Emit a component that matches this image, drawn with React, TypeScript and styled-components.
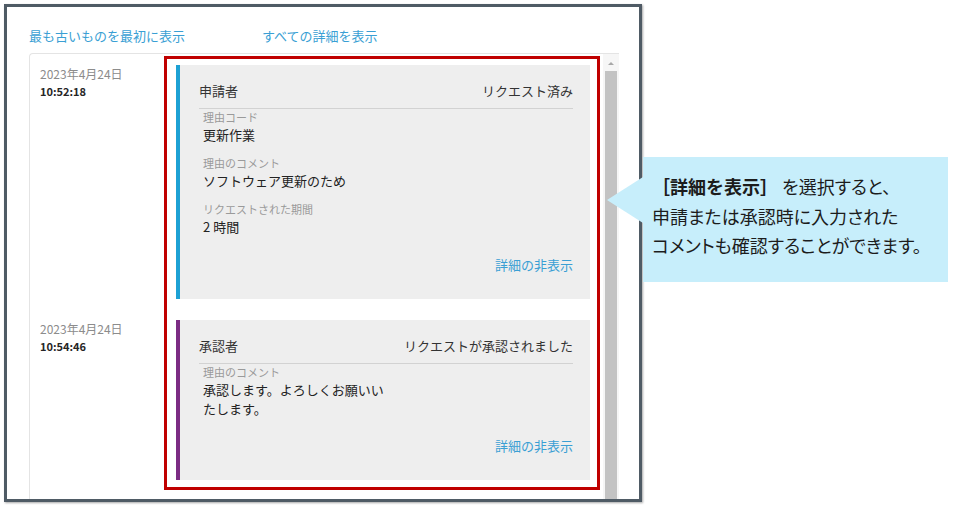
import React from 'react';
import styled, { createGlobalStyle } from 'styled-components';

const GlobalStyle = createGlobalStyle`
  body {
    margin: 0;
    background: #fff;
    font-family: "Noto Sans CJK JP", "Noto Sans", sans-serif;
  }
`;

const Page = styled.div`
  position: relative;
  width: 956px;
  height: 507px;
  padding: 4px;
  box-sizing: border-box;
  background: #fff;
  overflow: hidden;
`;

const Frame = styled.div`
  width: 638px;
  height: 498px;
  box-sizing: border-box;
  border: 3px solid #4f5b65;
  box-shadow: 1px 1px 2px rgba(0, 0, 0, 0.35);
  background: #fff;
  display: flex;
  flex-direction: column;
  overflow: hidden;
`;

const LinksRow = styled.div`
  display: flex;
  gap: 77px;
  padding: 20px 0 0 22px;
  margin-bottom: 8px;
`;

const TextLink = styled.a`
  font-size: 13px;
  line-height: 18px;
  color: #3a9fd4;
  text-decoration: none;
  cursor: pointer;
`;

const Panel = styled.div`
  margin-left: 22px;
  width: 589px;
  flex: 1;
  display: flex;
  border-left: 1px solid #e4e4e4;
  border-top: 1px solid #e4e4e4;
  border-top-left-radius: 4px;
  overflow: hidden;
`;

const Timeline = styled.div`
  position: relative;
  flex: 1;
  padding-top: 11px;
  display: flex;
  flex-direction: column;
  gap: 21px;
`;

const Entry = styled.div`
  display: grid;
  grid-template-columns: 146px 1fr;
  padding-right: 13px;
`;

const DateCell = styled.div`
  padding: 1px 0 0 10px;
`;

const DateText = styled.div`
  font-size: 12px;
  line-height: 16px;
  color: #8c8c8c;
`;

const TimeText = styled.div`
  font-size: 11px;
  line-height: 16px;
  font-weight: 600;
  color: #262626;
  margin-top: 1px;
`;

const Card = styled.div<{ $accent: string }>`
  background: #eeeeee;
  border-left: 4px solid ${(p) => p.$accent};
  padding: 17px 17px 25px 19px;
`;

const CardHeader = styled.div`
  display: flex;
  justify-content: space-between;
  font-size: 13px;
  line-height: 18px;
  color: #333;
  padding-bottom: 8px;
  border-bottom: 1px solid #d2d2d2;
`;

const Fields = styled.div`
  display: flex;
  flex-direction: column;
  gap: 11px;
  padding-left: 4px;
  width: 184px;
`;

const Field = styled.div`
  display: flex;
  flex-direction: column;
`;

const FieldLabel = styled.div`
  font-size: 11px;
  line-height: 16px;
  color: #9a9a9a;
`;

const FieldValue = styled.div`
  font-size: 13px;
  line-height: 19px;
  color: #222;
`;

const CardFooter = styled.div<{ $gap: number }>`
  display: flex;
  justify-content: flex-end;
  margin-top: ${(p) => p.$gap}px;
`;

const Highlight = styled.div`
  position: absolute;
  left: 134px;
  top: 2px;
  width: 436px;
  height: 434px;
  box-sizing: border-box;
  border: 3px solid #c00000;
  pointer-events: none;
`;

const Scrollbar = styled.div`
  width: 16px;
  background: #f6f6f6;
  display: flex;
  flex-direction: column;
  align-items: center;
`;

const ArrowUp = styled.div`
  margin-top: 8px;
  width: 0;
  height: 0;
  border-left: 3px solid transparent;
  border-right: 3px solid transparent;
  border-bottom: 3px solid #a8a8a8;
`;

const Thumb = styled.div`
  margin-top: 6px;
  width: 12px;
  flex: 1;
  background: #c3c3c3;
`;

const Callout = styled.div`
  position: absolute;
  left: 643px;
  top: 157px;
  width: 305px;
  height: 125px;
  box-sizing: border-box;
  background: #c7eefb;
  padding: 15px 0 0 9px;
  font-size: 18px;
  line-height: 29.5px;
  color: #1c1c1c;
  font-feature-settings: "palt";

  &::before {
    content: '';
    position: absolute;
    left: -36px;
    top: 20px;
    border-right: 36px solid #c7eefb;
    border-top: 23px solid transparent;
    border-bottom: 23px solid transparent;
  }
`;

const Strong = styled.b`
  font-weight: 700;
  font-feature-settings: normal;
`;

type Item = { label: string; value: string };

type Entry = {
  date: string;
  time: string;
  accent: string;
  role: string;
  status: string;
  fields: Item[];
  footerGap: number;
};

const entries: Entry[] = [
  {
    date: '2023年4月24日',
    time: '10:52:18',
    accent: '#1da1d4',
    role: '申請者',
    status: 'リクエスト済み',
    fields: [
      { label: '理由コード', value: '更新作業' },
      { label: '理由のコメント', value: 'ソフトウェア更新のため' },
      { label: 'リクエストされた期間', value: '2 時間' },
    ],
    footerGap: 20,
  },
  {
    date: '2023年4月24日',
    time: '10:54:46',
    accent: '#7b2c83',
    role: '承認者',
    status: 'リクエストが承認されました',
    fields: [{ label: '理由のコメント', value: '承認します。よろしくお願いいたします。' }],
    footerGap: 19,
  },
];

export default function App() {
  return (
    <Page>
      <GlobalStyle />
      <Frame>
        <LinksRow>
          <TextLink>最も古いものを最初に表示</TextLink>
          <TextLink>すべての詳細を表示</TextLink>
        </LinksRow>
        <Panel>
          <Timeline>
            {entries.map((e, i) => (
              <Entry key={i}>
                <DateCell>
                  <DateText>{e.date}</DateText>
                  <TimeText>{e.time}</TimeText>
                </DateCell>
                <Card $accent={e.accent}>
                  <CardHeader>
                    <span>{e.role}</span>
                    <span>{e.status}</span>
                  </CardHeader>
                  <Fields>
                    {e.fields.map((f) => (
                      <Field key={f.label}>
                        <FieldLabel>{f.label}</FieldLabel>
                        <FieldValue>{f.value}</FieldValue>
                      </Field>
                    ))}
                  </Fields>
                  <CardFooter $gap={e.footerGap}>
                    <TextLink>詳細の非表示</TextLink>
                  </CardFooter>
                </Card>
              </Entry>
            ))}
            <Highlight />
          </Timeline>
          <Scrollbar>
            <ArrowUp />
            <Thumb />
          </Scrollbar>
        </Panel>
      </Frame>
      <Callout>
        <Strong>［詳細を表示］</Strong> を選択すると、
        <br />
        申請または承認時に入力された
        <br />
        コメントも確認することができます。
      </Callout>
    </Page>
  );
}
